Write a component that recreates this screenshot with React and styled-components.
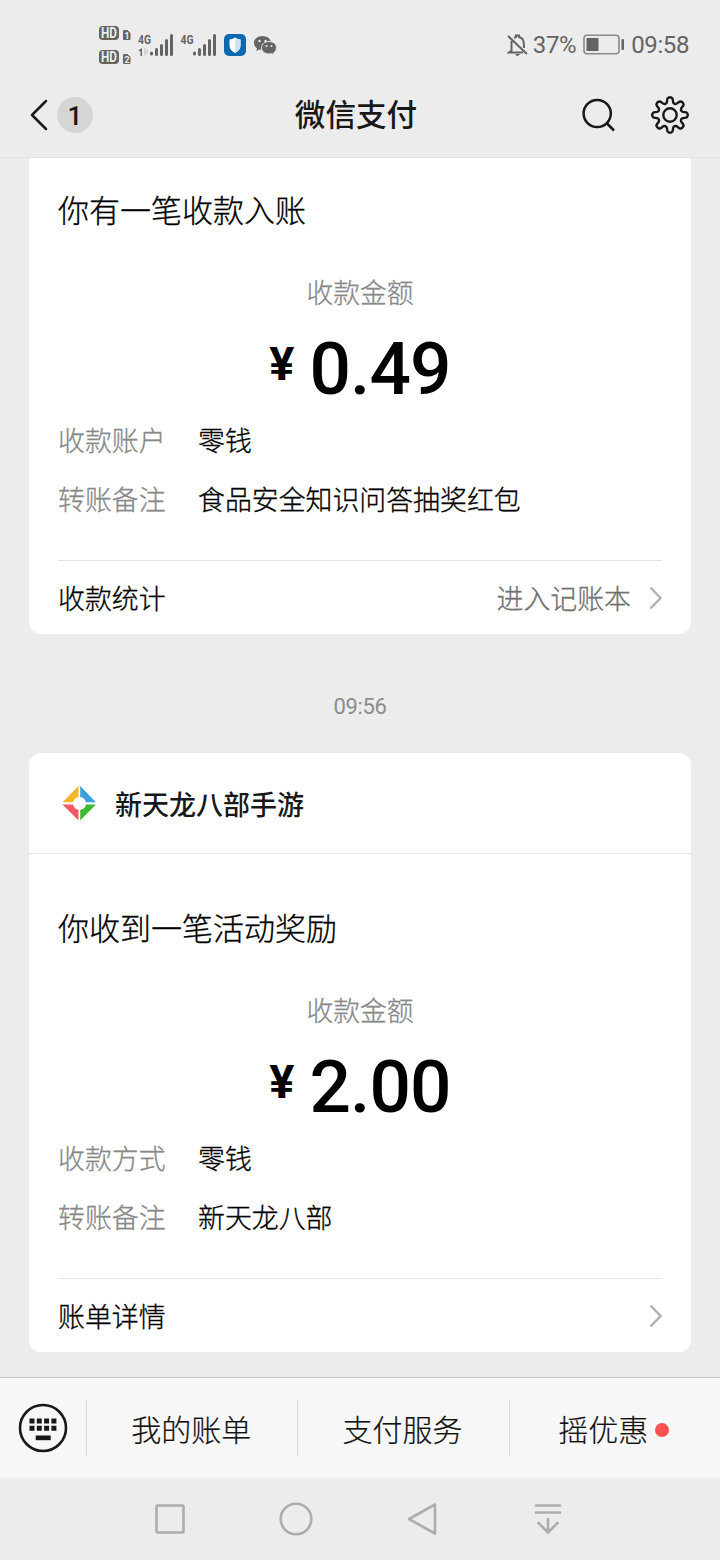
import React from 'react'
import styled, { createGlobalStyle } from 'styled-components'

const GlobalStyle = createGlobalStyle`
    * {
        box-sizing: border-box;
    }
    body {
        margin: 0;
        background-color: #ececec;
        font-family: "Noto Sans CJK SC", sans-serif;
        color: #181818;
    }
`

const Container = styled.div`
    width: 720px;
    height: 1560px;
    display: flex;
    flex-direction: column;
    overflow: hidden;
    background-color: #ececec;
`

const StatusBar = styled.div`
    height: 72px;
    padding: 17px 31px 0 98px;
    display: flex;
    justify-content: space-between;
    font-family: Roboto, sans-serif;
    color: #646464;
`

const StatusRight = styled.div`
    height: 56px;
    display: flex;
    align-items: center;
    font-size: 24px;
    letter-spacing: -0.4px;
`

const BellIcon = styled.svg`
    margin-right: 5px;
`

const BatteryIcon = styled.svg`
    margin: 0 6px 0 7px;
`

const Header = styled.div`
    height: 86px;
    padding: 0 31px 0 29px;
    display: grid;
    grid-template-columns: 1fr auto 1fr;
    align-items: center;
    border-bottom: 1px solid #e4e4e4;
`

const HeaderLeft = styled.div`
    display: flex;
    align-items: center;
    gap: 9px;
`

const Count = styled.span`
    width: 36px;
    height: 36px;
    padding-top: 2px;
    border-radius: 50%;
    background-color: #d5d5d5;
    display: flex;
    align-items: center;
    justify-content: center;
    font: 500 26px Roboto, sans-serif;
`

const Title = styled.h1`
    margin: 0;
    padding: 0 6px 4px 0;
    font-size: 30.6px;
    line-height: 44px;
    font-weight: 500;
`

const HeaderRight = styled.div`
    display: flex;
    align-items: center;
    justify-content: flex-end;
    gap: 35px;
`

const Messages = styled.div`
    height: 1219px;
    padding: 0 29px;
    display: flex;
    flex-direction: column;
`

const Card = styled.div`
    background-color: white;
    border-radius: ${props => props.$cut ? '0 0 12px 12px' : '12px'};
`

const Time = styled.div`
    height: 119px;
    padding-top: 26px;
    line-height: 94px;
    text-align: center;
    font-family: Roboto, sans-serif;
    font-size: 22px;
    letter-spacing: -0.4px;
    color: #8c8c8c;
`

const CardHeader = styled.div`
    height: 101px;
    padding: 0 32px;
    display: flex;
    align-items: center;
    gap: 17px;
    border-bottom: 1px solid #e4e4e4;
    font-size: 27px;
    font-weight: 500;
`

const CardBody = styled.div`
    padding: ${props => props.$top}px 29px 0;
    font-weight: 300;
    -webkit-text-stroke-width: 0.3px;
    color: #000;
`

const Heading = styled.div`
    font-size: 31px;
    line-height: 44px;
`

const AmountLabel = styled.div`
    margin-top: 43px;
    text-align: center;
    font-size: 26.8px;
    line-height: 36px;
    color: #888;
`

const Amount = styled.div`
    height: 80px;
    margin-top: 18px;
    margin-bottom: 4px;
    display: flex;
    justify-content: center;
    font-family: Roboto, sans-serif;
    font-weight: 500;
    -webkit-text-stroke-width: 0;
`

const Yen = styled.span`
    margin-right: 16px;
    font-size: 47px;
    line-height: 71px;
    font-weight: 700;
    letter-spacing: -1px;
`

const Digits = styled.span`
    font-size: 73px;
    line-height: 82px;
    letter-spacing: -0.9px;
`

const Row = styled.div`
    height: 59px;
    padding-bottom: 3px;
    display: grid;
    grid-template-columns: 140px 1fr;
    align-items: center;
    font-size: 26.9px;
    line-height: 36px;
`

const Label = styled.span`
    color: #888;
`

const CardFooter = styled.div`
    height: 74px;
    margin-top: 30px;
    border-top: 1px solid #e4e4e4;
    display: flex;
    align-items: center;
    font-size: 26.9px;
    line-height: 36px;
`

const FooterLink = styled.span`
    margin-left: auto;
    margin-right: 18px;
    color: #707070;
`

const MenuBar = styled.div`
    height: 101px;
    display: flex;
    align-items: center;
    border-top: 1px solid #c8c8c8;
    background-color: #f7f7f7;
`

const KeyboardButton = styled.div`
    width: 86px;
    display: flex;
    justify-content: center;
`

const MenuItem = styled.div`
    flex: 1;
    height: 58px;
    padding-right: 2px;
    display: flex;
    align-items: center;
    justify-content: center;
    border-left: 1px solid #dcdcdc;
    font-size: 30px;
    font-weight: 300;
    -webkit-text-stroke-width: 0.2px;
    color: #111;
`

const Dot = styled.span`
    width: 14px;
    height: 14px;
    margin-top: 3px;
    margin-left: 7px;
    border-radius: 50%;
    background-color: #fa5151;
`

const NavBar = styled.div`
    height: 82px;
    padding: 0 107px;
    display: grid;
    grid-template-columns: repeat(4, 126px);
    align-items: center;
    justify-items: center;
`

const Signals = () => (
    <svg width="182" height="52" viewBox="0 0 182 52" fill="#646464">
        {[9, 33].map((y, i) => (
            <g key={y} fontFamily="Roboto" fontWeight="700">
                <rect x="1" y={y} width="20" height="14" rx="4" />
                <text x="3" y={y + 12} fontSize="14" textLength="16" lengthAdjust="spacingAndGlyphs" fill="#ececec">HD</text>
                <path d={`M25.500 ${y + 4.5} h4 l2.500 2.500 v6.500 h-6.500 z`} stroke="#646464" strokeLinejoin="round" />
                <text x="26.200" y={y + 13} fontSize="9.500" fill="#ececec">{i + 1}</text>
            </g>
        ))}
        <g fontFamily="Roboto" fontWeight="700" fontSize="13.500">
            <text x="40" y="27" textLength="13" lengthAdjust="spacingAndGlyphs">4G</text>
            <text x="82.500" y="27" textLength="13" lengthAdjust="spacingAndGlyphs">4G</text>
        </g>
        <path d="M40 34 l4 -3 v8 h-1.500 v-5 z" />
        <path d="M47 31 v7 M49 33 v4" stroke="#bdbdbd" strokeWidth="1" />
        {[52, 95].map(x => (
            <path
                key={x}
                d={`M${x + 1.5} 36 v1 M${x + 6.5} 32.500 v5 M${x + 11.500} 28.500 v9 M${x + 16.500} 23.500 v14 M${x + 21.500} 18.500 v19`}
                stroke="#646464"
                strokeWidth="3"
                strokeLinecap="round"
            />
        ))}
        <rect x="126" y="17" width="22" height="22" rx="5" fill="#0c68b0" />
        <path d="M137 20.500 q3 2 5.500 2 v6 q0 4.500 -5.500 7.500 q-5.500 -3 -5.500 -7.500 v-6 q2.500 0 5.500 -2z" fill="#fff" />
        <path d="M137 20.500 q3 2 5.500 2 v6 q0 4.500 -5.500 7.500z" fill="#cfe3f2" />
        <path d="M164.500 19 c-5 0 -8.500 3 -8.500 7 c0 2.200 1.200 4.200 3 5.400 l-.8 2.600 l3.200 -1.600 c1 .3 2 .4 3.100 .4 c5 0 8.500 -3 8.500 -6.800 s-3.500 -7 -8.500 -7z" />
        <path d="M171 24.500 c-4.500 0 -7.500 2.800 -7.500 6.200 s3 6.300 7.500 6.300 q1.300 0 2.600 -.4 l2.800 1.500 l-.7 -2.300 c1.700 -1.100 2.800 -3 2.800 -5.100 c0 -3.400 -3 -6.200 -7.500 -6.200z" stroke="#ececec" strokeWidth="1" />
        <g fill="#ececec">
            <circle cx="161.500" cy="24" r="1.200" />
            <circle cx="167.500" cy="24" r="1.200" />
            <circle cx="168.500" cy="29" r="1" />
            <circle cx="173.500" cy="29" r="1" />
        </g>
    </svg>
)

const Bell = () => (
    <BellIcon width="21" height="24" viewBox="0 0 21 24" fill="none" stroke="#646464" strokeWidth="2">
        <path d="M1 3 L20 21 M4.500 8 V17.500 L2 19.500 H16 M7 5 L9 4 V2.500 H12 V4 C16 5 17 7 17 15" />
        <path d="M8 21 H13 L10.500 23.500 Z" fill="#646464" stroke="none" />
    </BellIcon>
)

const Battery = () => (
    <BatteryIcon width="42" height="22" viewBox="0 0 42 22">
        <rect x="1" y="1.300" width="35" height="18.500" rx="3" fill="none" stroke="#8a8a8a" strokeWidth="1.600" />
        <rect x="3.500" y="4" width="12" height="13" fill="#646464" />
        <rect x="38.500" y="5" width="2.500" height="11" rx="1" fill="#646464" />
    </BatteryIcon>
)

const BackIcon = () => (
    <svg width="19" height="32" viewBox="0 0 19 32" fill="none" stroke="#181818" strokeWidth="2.500" strokeLinecap="round" strokeLinejoin="round">
        <path d="M17 2 L3 16 L17 30" />
    </svg>
)

const SearchIcon = () => (
    <svg width="34" height="34" viewBox="0 0 34 34" fill="none" stroke="#181818" strokeWidth="2.500">
        <circle cx="15.200" cy="15.500" r="13.600" />
        <path d="M24.500 25 L32 32.500" />
    </svg>
)

// eight teeth, one every 45 degrees
const gearPath = () => {
    const points = []
    for (let i = 0; i < 8; i++) {
        const steps = [[-22.5, 11.8], [-13, 13], [-9.5, 17.2], [0, 18], [9.5, 17.2], [13, 13]]
        steps.forEach(([deg, r]) => {
            const a = (i * 45 + deg - 90) * Math.PI / 180
            points.push([19 + r * Math.cos(a), 19 + r * Math.sin(a)])
        })
    }
    const mid = (a, b) => `${((a[0] + b[0]) / 2).toFixed(2)} ${((a[1] + b[1]) / 2).toFixed(2)}`
    let d = `M${mid(points[points.length - 1], points[0])}`
    points.forEach((p, i) => {
        d += ` Q${p[0].toFixed(2)} ${p[1].toFixed(2)} ${mid(p, points[(i + 1) % points.length])}`
    })
    return d + 'Z'
}

const GearIcon = () => (
    <svg width="38" height="38" viewBox="0 0 38 38" fill="none" stroke="#181818" strokeWidth="2.400">
        <path d={gearPath()} strokeLinejoin="round" />
        <circle cx="19" cy="19" r="6.700" />
    </svg>
)

const Chevron = () => (
    <svg width="13" height="24" viewBox="0 0 13 24" fill="none" stroke="#b0b0b0" strokeWidth="2.400">
        <path d="M1.500 1.500 L11.500 12 L1.500 22.500" />
    </svg>
)

const GameLogo = () => (
    <svg width="37" height="36" viewBox="0 0 37 36">
        <path d="M17.500 1 V12 A7 7 0 0 0 12 17.200 H1.500 Z" fill="#f5b52a" />
        <path d="M19.200 1 V12 A7 7 0 0 1 25 17.200 H35 Z" fill="#3d9fdc" />
        <path d="M17.500 35.500 V24.800 A7 7 0 0 1 12 19.500 H1.500 Z" fill="#ee5a63" />
        <path d="M19.200 35.500 V24.800 A7 7 0 0 0 25 19.500 H35 Z" fill="#3fb935" />
    </svg>
)

const KeyboardIcon = () => (
    <svg width="50" height="50" viewBox="0 0 50 50" fill="#181818">
        <circle cx="25" cy="25" r="23" fill="none" stroke="#181818" strokeWidth="2.600" />
        {[0, 1, 2, 3].map(i => (
            <path key={i} d={`M${11.500 + i * 7.300} 15.500 h5 v5 h-5z m0 7.300 h5 v5 h-5z`} />
        ))}
        <rect x="17.700" y="32.500" width="15" height="4.700" />
    </svg>
)

const NavIcon = ({ children }) => (
    <svg width="36" height="36" viewBox="0 0 36 36" fill="none" stroke="#adadad" strokeWidth="2.600" strokeLinecap="round" strokeLinejoin="round">
        {children}
    </svg>
)

const Payment = ({ top, heading, amount, rows, footer, link }) => (
    <CardBody $top={top}>
        <Heading>{heading}</Heading>
        <AmountLabel>收款金额</AmountLabel>
        <Amount>
            <Yen>¥</Yen>
            <Digits>{amount}</Digits>
        </Amount>
        {rows.map(([label, value]) => (
            <Row key={label}>
                <Label>{label}</Label>
                <span>{value}</span>
            </Row>
        ))}
        <CardFooter>
            {footer}
            <FooterLink>{link}</FooterLink>
            <Chevron />
        </CardFooter>
    </CardBody>
)

const App = () => {
  return (
    <Container>
        <GlobalStyle />
        <StatusBar>
            <Signals />
            <StatusRight>
                <Bell />
                37%
                <Battery />
                09:58
            </StatusRight>
        </StatusBar>
        <Header>
            <HeaderLeft>
                <BackIcon />
                <Count>1</Count>
            </HeaderLeft>
            <Title>微信支付</Title>
            <HeaderRight>
                <SearchIcon />
                <GearIcon />
            </HeaderRight>
        </Header>
        <Messages>
            <Card $cut>
                <Payment
                    top={29}
                    heading="你有一笔收款入账"
                    amount="0.49"
                    rows={[['收款账户', '零钱'], ['转账备注', '食品安全知识问答抽奖红包']]}
                    footer="收款统计"
                    link="进入记账本"
                />
            </Card>
            <Time>09:56</Time>
            <Card>
                <CardHeader>
                    <GameLogo />
                    新天龙八部手游
                </CardHeader>
                <Payment
                    top={51}
                    heading="你收到一笔活动奖励"
                    amount="2.00"
                    rows={[['收款方式', '零钱'], ['转账备注', '新天龙八部']]}
                    footer="账单详情"
                />
            </Card>
        </Messages>
        <MenuBar>
            <KeyboardButton>
                <KeyboardIcon />
            </KeyboardButton>
            <MenuItem>我的账单</MenuItem>
            <MenuItem>支付服务</MenuItem>
            <MenuItem>摇优惠<Dot /></MenuItem>
        </MenuBar>
        <NavBar>
            <NavIcon><rect x="4.500" y="4.500" width="27" height="27" rx="1" /></NavIcon>
            <NavIcon><circle cx="18" cy="18" r="15.300" /></NavIcon>
            <NavIcon><path d="M31 3.500 V32.500 L5 18 Z" /></NavIcon>
            <NavIcon><path d="M6 4.500 H30 M6 11.500 H30 M18 18 V31.500 M8.500 22 L18 31.500 L27.500 22" /></NavIcon>
        </NavBar>
    </Container>
  )
}

export default App
